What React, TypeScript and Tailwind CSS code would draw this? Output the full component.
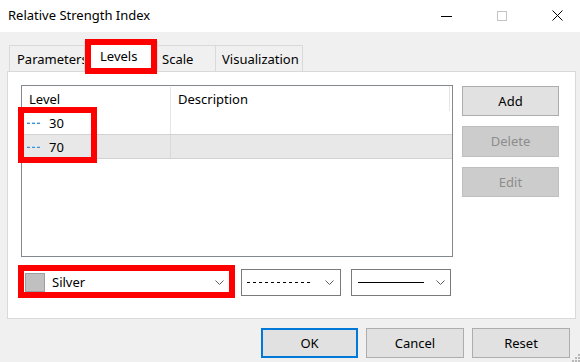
import React from "react";

const Chevron = () => (
  <svg width="9" height="5" viewBox="0 0 9 5" className="block">
    <path d="M0.5 0.5L4.5 4.5L8.5 0.5" fill="none" stroke="#5f5f5f" strokeWidth="1" />
  </svg>
);

const DashIcon = () => (
  <svg width="15" height="3" viewBox="0 0 15 3" className="block">
    <rect x="0" y="1" width="3" height="1" fill="#3d8fdf" />
    <rect x="5" y="1" width="3" height="1" fill="#3d8fdf" />
    <rect x="10" y="1" width="3" height="1" fill="#3d8fdf" />
    <rect x="0" y="0" width="3" height="1" fill="#b4d3f2" />
    <rect x="5" y="0" width="3" height="1" fill="#b4d3f2" />
    <rect x="10" y="0" width="3" height="1" fill="#b4d3f2" />
  </svg>
);

export default function App() {
  return (
    <div className="relative w-[580px] h-[362px] overflow-hidden bg-[#f0f0f0] text-[13px] text-black font-['Noto_Sans',sans-serif] leading-none">
      {/* Title bar */}
      <div className="h-[32px] bg-white flex items-center pl-[8px] pr-[17px] pb-[1px]">
        <span>Relative Strength Index</span>
        <div className="ml-auto flex items-center gap-[45px]">
          <svg width="11" height="10" viewBox="0 0 11 10" className="block">
            <rect x="0" y="5" width="11" height="1" fill="#000" />
          </svg>
          <svg width="10" height="10" viewBox="0 0 10 10" className="block">
            <rect x="0.5" y="0.5" width="9" height="9" fill="none" stroke="#c4c4c4" />
          </svg>
          <svg width="11" height="11" viewBox="0 0 11 11" className="block">
            <path d="M0.5 0.5L10.5 10.5M10.5 0.5L0.5 10.5" stroke="#000" strokeWidth="1" />
          </svg>
        </div>
      </div>

      {/* Tabs */}
      <div className="mt-[9px] h-[30px] pl-[9px] flex items-start">
        <div className="mt-[4px] h-[26px] w-[77px] border border-b-0 border-[#d9d9d9] bg-[#f0f0f0] flex items-center pl-[7px] pt-[1px] whitespace-nowrap">
          Parameters
        </div>
        <div className="relative z-10 -ml-[2px] -mr-[2px] h-[31px] w-[74px] border border-b-0 border-[#d9d9d9] bg-white flex items-center pl-[15px] pb-[1px]">
          Levels
        </div>
        <div className="mt-[4px] h-[26px] w-[60px] border border-b-0 border-l-0 border-[#d9d9d9] bg-[#f0f0f0] flex items-center pl-[6px] pt-[1px]">
          Scale
        </div>
        <div className="mt-[4px] h-[26px] w-[87px] border border-b-0 border-l-0 border-[#d9d9d9] bg-[#f0f0f0] flex items-center pl-[6px] pt-[1px] whitespace-nowrap">
          Visualization
        </div>
      </div>

      {/* Panel */}
      <div className="ml-[7px] w-[569px] h-[248px] border border-[#d9d9d9] bg-white pl-[13px] pt-[13px] flex flex-col">
        <div className="flex">
          {/* List */}
          <div className="relative w-[432px] h-[172px] border border-[#828790] bg-white">
            <div className="flex h-[25px] items-center pt-[1px]">
              <div className="w-[149px] pl-[7px] h-full flex items-center border-r border-[#e5e5e5]">Level</div>
              <div className="pl-[7px]">Description</div>
            </div>
            <div className="absolute right-[2px] top-0 h-[25px] w-px bg-[#e5e5e5]" />
            <div className="flex h-[24px] items-center border-b border-[#d2d2d2]">
              <div className="w-[149px] h-full flex items-center pl-[5px] gap-[7px] border-r border-[#e5e5e5] pt-[1px]">
                <DashIcon />
                <span>30</span>
              </div>
            </div>
            <div className="flex h-[24px] items-center bg-[#e8e8e8] border-b border-[#d2d2d2]">
              <div className="w-[149px] h-full flex items-center pl-[5px] gap-[7px] border-r border-[#dadada] pt-[1px]">
                <DashIcon />
                <span>70</span>
              </div>
            </div>
          </div>
          {/* Buttons */}
          <div className="ml-[9px] mt-[1px] flex flex-col gap-[10px]">
            <div className="w-[97px] h-[30px] border border-[#adadad] bg-[#e1e1e1] flex items-center justify-center">Add</div>
            <div className="w-[97px] h-[31px] border border-[#bfbfbf] bg-[#cccccc] text-[#8c8c8c] flex items-center justify-center">Delete</div>
            <div className="w-[97px] h-[30px] border border-[#bfbfbf] bg-[#cccccc] text-[#8c8c8c] flex items-center justify-center">Edit</div>
          </div>
        </div>

        {/* Combos */}
        <div className="mt-[12px] flex gap-[10px]">
          <div className="w-[210px] h-[27px] border border-[#7a7a7a] bg-white flex items-center pl-[3px] pr-[6px]">
            <div className="w-[20px] h-[19px] bg-[#c0c0c0] border border-[#9e9e9e]" />
            <span className="ml-[7px]">Silver</span>
            <div className="ml-auto"><Chevron /></div>
          </div>
          <div className="w-[100px] h-[27px] border border-[#7a7a7a] bg-white flex items-center pl-[5px] pr-[6px]">
            <svg width="66" height="1" viewBox="0 0 66 1" className="block">
              <line x1="0" y1="0.5" x2="66" y2="0.5" stroke="#000" strokeDasharray="3 3" />
            </svg>
            <div className="ml-auto"><Chevron /></div>
          </div>
          <div className="w-[100px] h-[27px] border border-[#7a7a7a] bg-white flex items-center pl-[6px] pr-[5px]">
            <svg width="66" height="1" viewBox="0 0 66 1" className="block">
              <line x1="0" y1="0.5" x2="66" y2="0.5" stroke="#000" />
            </svg>
            <div className="ml-auto"><Chevron /></div>
          </div>
        </div>
      </div>

      {/* Bottom buttons */}
      <div className="mt-[9px] flex justify-end gap-[8px] pr-[10px]">
        <div className="w-[97px] h-[30px] border-2 border-[#0078d7] bg-[#e1e1e1] flex items-center justify-center">OK</div>
        <div className="w-[98px] h-[30px] border border-[#adadad] bg-[#e1e1e1] flex items-center justify-center">Cancel</div>
        <div className="w-[98px] h-[30px] border border-[#adadad] bg-[#e1e1e1] flex items-center justify-center">Reset</div>
      </div>

      {/* Resize grip */}
      <svg width="8" height="8" viewBox="0 0 8 8" className="absolute right-0 bottom-0 block">
        <rect x="6" y="0" width="2" height="2" fill="#b8b8b8" />
        <rect x="3" y="3" width="2" height="2" fill="#b8b8b8" />
        <rect x="6" y="3" width="2" height="2" fill="#b8b8b8" />
        <rect x="0" y="6" width="2" height="2" fill="#b8b8b8" />
        <rect x="3" y="6" width="2" height="2" fill="#b8b8b8" />
        <rect x="6" y="6" width="2" height="2" fill="#b8b8b8" />
      </svg>

      {/* Red highlight annotations */}
      <div className="absolute left-[85px] top-[39px] w-[72px] h-[35px] border-[6px] border-[#ff0000] z-20" />
      <div className="absolute left-[18px] top-[107px] w-[79px] h-[56px] border-[6px] border-[#ff0000] z-20" />
      <div className="absolute left-[18px] top-[265px] w-[217px] h-[33px] border-[6px] border-[#ff0000] z-20" />
    </div>
  );
}
